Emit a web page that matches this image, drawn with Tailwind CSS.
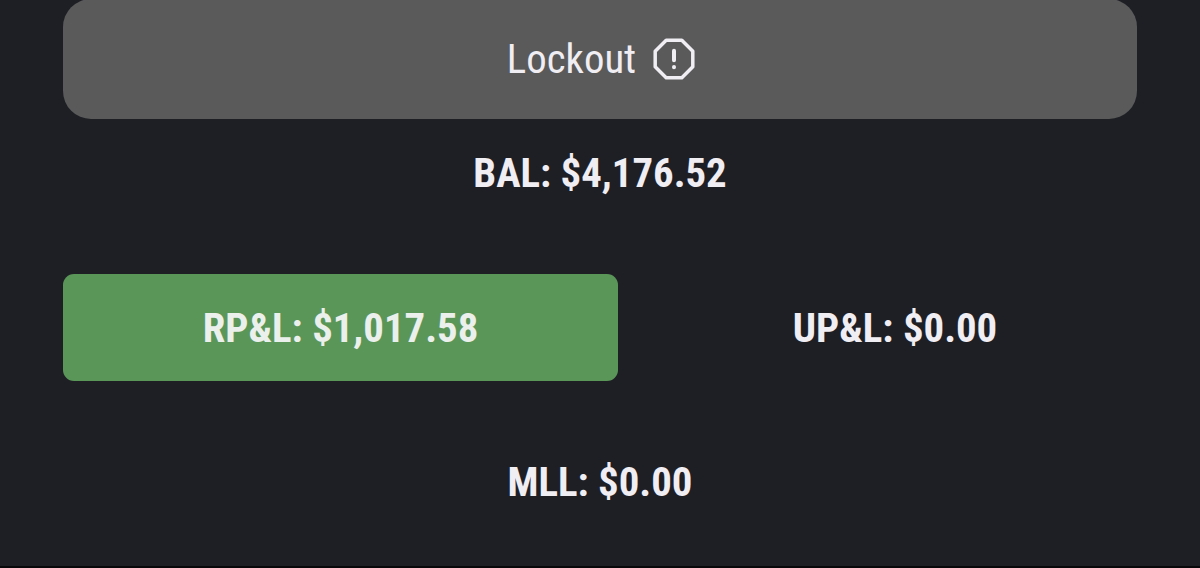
<!DOCTYPE html>
<html lang="en">
<head>
  <meta charset="UTF-8">
  <meta name="viewport" content="width=device-width, initial-scale=1">
  <title>Account</title>
  <script src="https://cdn.jsdelivr.net/npm/@tailwindcss/browser@4"></script>
</head>
<body class="h-[568px] overflow-hidden bg-[#1e1f25] font-['Roboto_Condensed','Roboto',sans-serif] font-stretch-condensed text-[40.8px] leading-[48px] text-[#f0edf3] whitespace-nowrap">
  <main class="flex flex-col h-full px-[63px] border-b-2 border-[#08080a]">
    <!-- Lockout button -->
    <button class="flex shrink-0 items-center justify-center gap-[17px] w-[1074px] h-[120px] -mt-px pl-[2px] rounded-[28px] bg-[#5a5a5a]">
      <span>Lockout</span>
      <svg class="size-[42px]" viewBox="0 0 42 42" fill="none" stroke="currentColor" stroke-width="3.5" stroke-linecap="round" stroke-linejoin="round">
        <path d="M13.2 2.2h15.6L39.8 13.2v15.6L28.8 39.8H13.2L2.2 28.8V13.2z"/>
        <path d="M21 12.800v9.400M21 29v.2" stroke-width="4"/>
      </svg>
    </button>

    <!-- Balance -->
    <div class="flex items-center justify-center h-[108px] font-bold"><span>BAL: $4,176.52</span></div>

    <!-- Realized / unrealized P&L -->
    <div class="flex gap-[35px] mt-[47px] h-[107px] font-bold">
      <div class="flex items-center justify-center w-[555px] rounded-[11px] bg-[#5b9659] text-[#ecf0ec]"><span>RP&amp;L: $1,017.58</span></div>
      <div class="flex items-center justify-center flex-1"><span>UP&amp;L: $0.00</span></div>
    </div>

    <!-- Max loss limit -->
    <div class="flex items-center justify-center mt-[47px] h-[107px] font-bold"><span>MLL: $0.00</span></div>
  </main>
</body>
</html>
